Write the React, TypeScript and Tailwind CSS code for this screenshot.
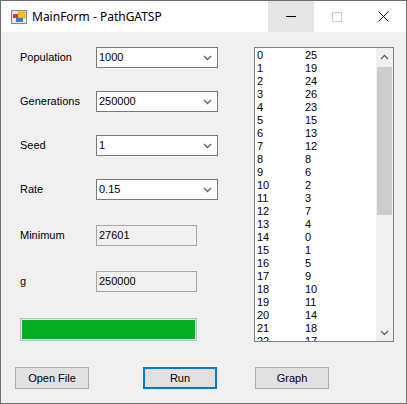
import React from 'react';

const FONT = { fontFamily: '"Liberation Sans", Arial, sans-serif' };

const ORDER = [25, 19, 24, 26, 23, 15, 13, 12, 8, 6, 2, 3, 7, 4, 0, 1, 5, 9, 10, 11, 14, 18, 17];

function Chevron({ up = false }: { up?: boolean }) {
  return (
    <svg width="9" height="6" viewBox="0 0 9 6" className="block">
      <path
        d={up ? 'M1 5 L4.5 1.5 L8 5' : 'M1 1 L4.5 4.5 L8 1'}
        fill="none"
        stroke="#606060"
        strokeWidth="1.3"
      />
    </svg>
  );
}

function Combo({ value }: { value: string }) {
  return (
    <div className="flex h-[21px] w-[122px] items-center border border-[#7a7a7a] bg-white pl-[2px] pr-[5px] text-[11px] text-black">
      <span className="flex-1">{value}</span>
      <Chevron />
    </div>
  );
}

function ReadBox({ value }: { value: string }) {
  return (
    <div className="flex h-[21px] w-[101px] items-center border border-[#a6a6a6] bg-[#f0f0f0] pl-[2px] text-[11px] text-black">
      {value}
    </div>
  );
}

function Row({ label, children, className = '' }: { label: string; children: React.ReactNode; className?: string }) {
  return (
    <div className={`flex items-center ${className}`}>
      <span className="w-[76px] text-[11px] text-black">{label}</span>
      {children}
    </div>
  );
}

function WinButton({ label, focused = false, className = '' }: { label: string; focused?: boolean; className?: string }) {
  return (
    <div
      className={`flex h-[22px] w-[74px] items-center justify-center bg-[#e1e1e1] text-[11px] text-black ${
        focused ? 'border-2 border-[#0078d7]' : 'border border-[#adadad]'
      } ${className}`}
    >
      {label}
    </div>
  );
}

export default function App() {
  return (
    <div className="flex h-[404px] w-[407px] flex-col overflow-hidden border border-[#6f6f6f] bg-[#f0f0f0]" style={FONT}>
      {/* title bar */}
      <div className="flex h-[31px] items-center bg-white">
        <svg width="16" height="16" viewBox="0 0 16 16" className="ml-[10px] mr-[5px]">
          <rect x="0.5" y="1.5" width="15" height="13" fill="#e8e8e8" stroke="#8a8a8a" />
          <rect x="2" y="5" width="5" height="4" fill="#d9392e" />
          <rect x="7" y="3" width="7" height="6" fill="#f5c518" stroke="#c99a00" strokeWidth="0.6" />
          <rect x="5" y="9" width="7" height="4" fill="#3b78d8" />
        </svg>
        <span className="text-[12px] text-black" style={{ fontFamily: '"Noto Sans", "Open Sans", sans-serif' }}>
          MainForm - PathGATSP
        </span>
        <div className="ml-auto flex h-full">
          <div className="flex h-full w-[46px] items-center justify-center bg-[#e5e5e5]">
            <div className="h-px w-[10px] bg-black" />
          </div>
          <div className="flex h-full w-[46px] items-center justify-center">
            <div className="h-[10px] w-[10px] border border-[#cccccc]" />
          </div>
          <div className="flex h-full w-[46px] items-center justify-center">
            <svg width="11" height="11" viewBox="0 0 11 11">
              <path d="M0.5 0.5 L10.5 10.5 M10.5 0.5 L0.5 10.5" stroke="#000" strokeWidth="1" />
            </svg>
          </div>
        </div>
      </div>

      {/* body */}
      <div className="flex flex-1 flex-col pt-[15px]">
        <div className="flex">
          <div className="flex w-[253px] flex-col pl-[19px]">
            <Row label="Population">
              <Combo value="1000" />
            </Row>
            <Row label="Generations" className="mt-[23px]">
              <Combo value="250000" />
            </Row>
            <Row label="Seed" className="mt-[23px]">
              <Combo value="1" />
            </Row>
            <Row label="Rate" className="mt-[23px]">
              <Combo value="0.15" />
            </Row>
            <Row label="Minimum" className="mt-[25px]">
              <ReadBox value="27601" />
            </Row>
            <Row label="g" className="mt-[25px]">
              <ReadBox value="250000" />
            </Row>
            <div className="mt-[26px] h-[23px] w-[177px] border border-[#bcbcbc] bg-[#e6e6e6] p-px">
              <div className="h-full w-full bg-[#06b025]" />
            </div>
          </div>

          {/* list box */}
          <div className="flex h-[295px] w-[140px] border border-[#828282] bg-white">
            <div className="flex-1 overflow-hidden pl-[2px] pt-px">
              {ORDER.map((v, i) => (
                <div key={i} className="flex h-[13px] items-center text-[11px] leading-[13px] text-black">
                  <span className="w-[48px]">{i}</span>
                  <span>{v}</span>
                </div>
              ))}
            </div>
            <div className="flex w-[17px] flex-col bg-[#f0f0f0]">
              <div className="flex h-[17px] items-center justify-center">
                <Chevron up />
              </div>
              <div className="mx-px mt-[2px] h-[148px] bg-[#cdcdcd]" />
              <div className="flex-1" />
              <div className="flex h-[17px] items-center justify-center">
                <Chevron />
              </div>
            </div>
          </div>
        </div>

        {/* buttons */}
        <div className="mt-[25px] flex pl-[14px]">
          <WinButton label="Open File" />
          <WinButton label="Run" focused className="ml-[54px]" />
          <WinButton label="Graph" className="ml-[38px]" />
        </div>
      </div>
    </div>
  );
}
